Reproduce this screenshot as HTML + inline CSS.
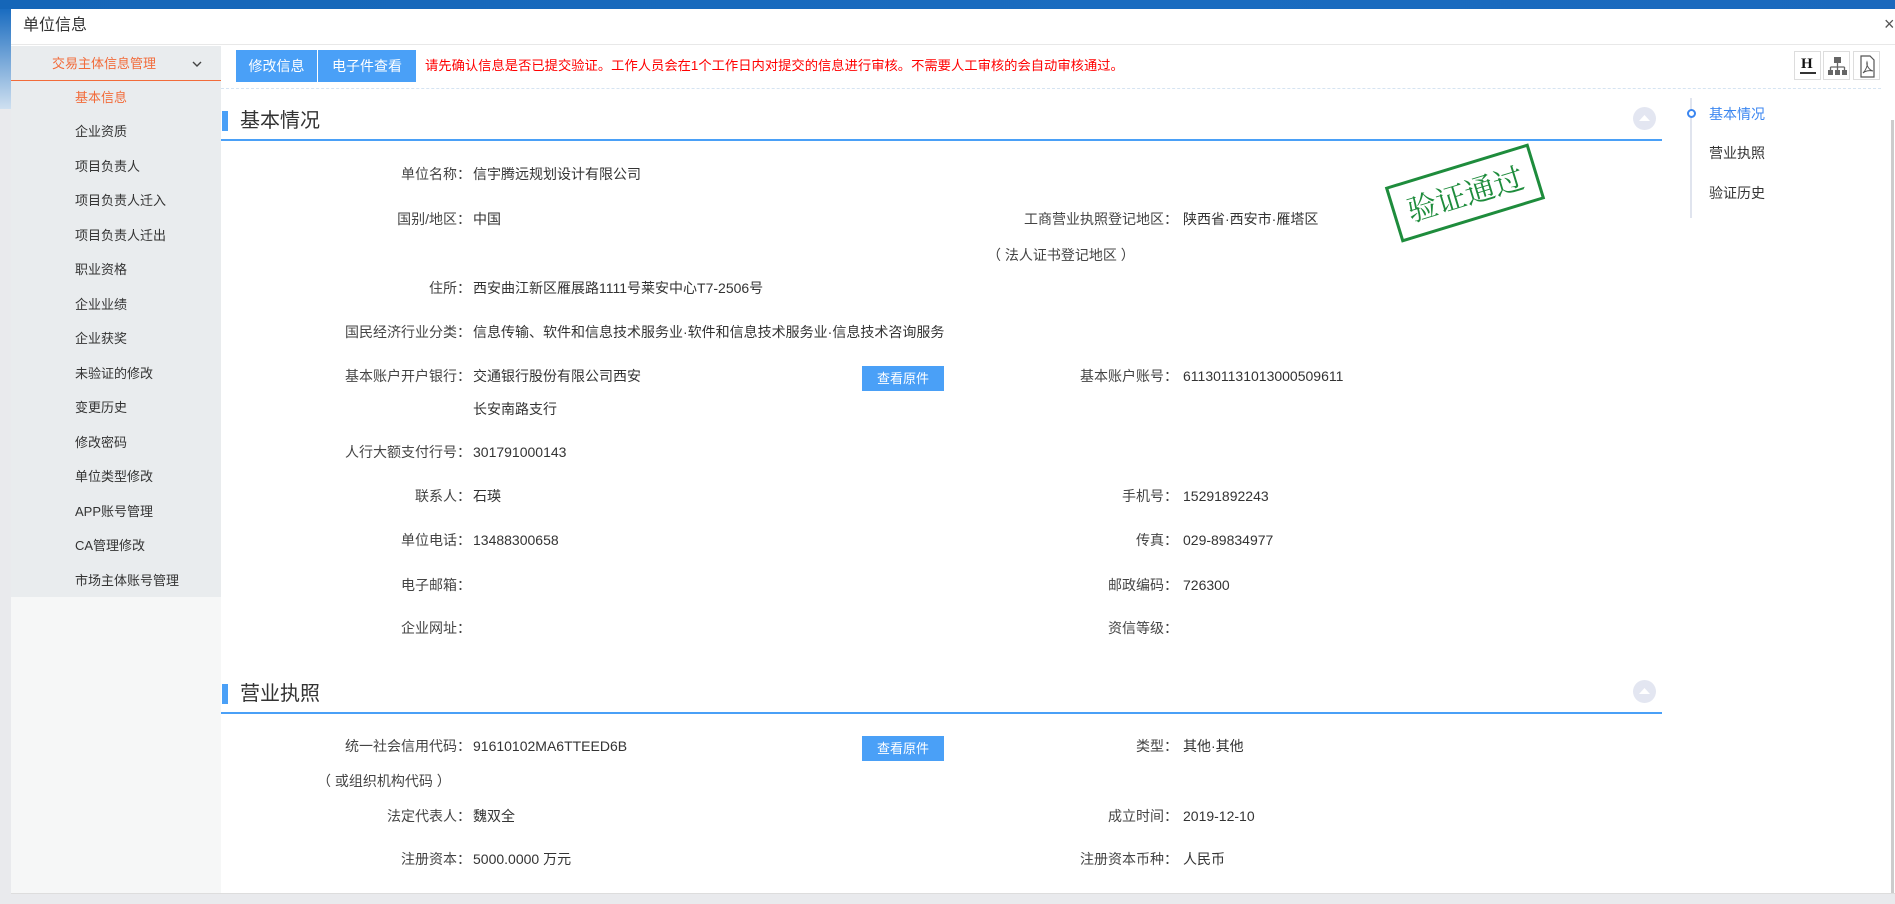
<!DOCTYPE html>
<html><head><meta charset="utf-8"><style>
*{margin:0;padding:0;box-sizing:border-box}
body{width:1895px;height:904px;overflow:hidden;background:#e9eaed;font-family:"Liberation Sans","Noto Sans CJK SC",sans-serif;color:#333;position:relative}
.a{position:absolute;white-space:nowrap}
.lab{position:absolute;font-size:14px;color:#444;text-align:right;line-height:20px;white-space:nowrap}
.val{position:absolute;font-size:14px;color:#333;line-height:20px;white-space:nowrap}
.side div{position:absolute;left:75px;font-size:13px;color:#333;line-height:20px;white-space:nowrap}
.btn{position:absolute;background:#4aa0f7;color:#fff;font-size:14px;text-align:center}
.ib{position:absolute;top:51px;width:27px;height:29px;border:1px solid #ddd;background:#fff}
</style></head><body>
<div class="a" style="left:0;top:0;width:1895px;height:9px;background:linear-gradient(90deg,#1566b8,#1a6cc0 60%,#1b69bd)"></div>
<div class="a" style="left:0;top:9px;width:11px;height:100px;background:linear-gradient(#1a6cc0,#cfe0f0)"></div>
<div class="a" style="left:11px;top:9px;width:1884px;height:885px;background:#fff"></div>
<div class="a" style="left:23px;top:15px;font-size:16px;color:#333;line-height:22px">单位信息</div>
<div class="a" style="left:1884px;top:14px;font-size:18px;color:#555">×</div>
<div class="a" style="left:11px;top:44px;width:1884px;height:1px;background:#e8e8e8"></div>
<div class="a" style="left:11px;top:46px;width:210px;height:551px;background:#e9ecee"></div>
<div class="a" style="left:11px;top:597px;width:210px;height:296px;background:#f6f7f7"></div>
<div class="a" style="left:11px;top:80px;width:210px;height:1px;background:#f26b3a"></div>
<div class="a" style="left:52px;top:54px;font-size:13px;color:#f26b3a;line-height:20px">交易主体信息管理</div>
<svg class="a" style="left:191px;top:59px" width="12" height="10"><path d="M2 3 L6 7 L10 3" stroke="#444" stroke-width="1.4" fill="none"/></svg>
<div class="side">
<div style="top:88px;color:#f26b3a">基本信息</div>
<div style="top:122px">企业资质</div>
<div style="top:157px">项目负责人</div>
<div style="top:191px">项目负责人迁入</div>
<div style="top:226px">项目负责人迁出</div>
<div style="top:260px">职业资格</div>
<div style="top:295px">企业业绩</div>
<div style="top:329px">企业获奖</div>
<div style="top:364px">未验证的修改</div>
<div style="top:398px">变更历史</div>
<div style="top:433px">修改密码</div>
<div style="top:467px">单位类型修改</div>
<div style="top:502px">APP账号管理</div>
<div style="top:536px">CA管理修改</div>
<div style="top:571px">市场主体账号管理</div>
</div>
<div class="btn" style="left:236px;top:50px;width:81px;height:32px;line-height:32px">修改信息</div>
<div class="btn" style="left:318px;top:50px;width:98px;height:32px;line-height:32px">电子件查看</div>
<div class="a" style="left:425px;top:56px;font-size:13.3px;color:#f00;line-height:20px">请先确认信息是否已提交验证。工作人员会在1个工作日内对提交的信息进行审核。不需要人工审核的会自动审核通过。</div>
<div class="ib" style="left:1794px"><div style="position:absolute;left:6px;top:4px;font:bold 15px 'Liberation Serif',serif;color:#111">H</div><div style="position:absolute;left:5px;top:20px;width:16px;height:2px;background:#333"></div></div>
<div class="ib" style="left:1823px"><svg width="27" height="29"><rect x="10" y="5" width="7" height="6" fill="#666"/><path d="M13.5 11v4M6.5 15h14M6.5 15v3M13.5 15v3M20.5 15v3" stroke="#666" stroke-width="1.3" fill="none"/><rect x="4" y="18" width="5" height="5" fill="#666"/><rect x="11" y="18" width="5" height="5" fill="#666"/><rect x="18" y="18" width="5" height="5" fill="#666"/></svg></div>
<div class="ib" style="left:1853px"><svg width="27" height="29"><path d="M7 4h9l4 4v17H7z" stroke="#555" stroke-width="1.2" fill="none"/><path d="M9 21c3-3 5-8 4-11c-1 3 2 8 6 9c-4-1-8 0-10 2z" stroke="#555" stroke-width="1" fill="none"/></svg></div>
<div class="a" style="left:221px;top:88px;width:1660px;border-top:1px dashed #d6e4f2"></div>
<div class="a" style="left:1690px;top:98px;width:2px;height:120px;background:#e0e4ee"></div>
<div class="a" style="left:1687px;top:109px;width:9px;height:9px;border-radius:50%;border:2.5px solid #3b86f0;background:#fff"></div>
<div class="a" style="left:1709px;top:104px;font-size:14px;color:#3b86f0;line-height:20px">基本情况</div>
<div class="a" style="left:1709px;top:143px;font-size:14px;color:#333;line-height:20px">营业执照</div>
<div class="a" style="left:1709px;top:183px;font-size:14px;color:#333;line-height:20px">验证历史</div>
<div class="a" style="left:1891px;top:120px;width:3px;height:774px;background:#ccc"></div>
<div class="a" style="left:222px;top:111px;width:6px;height:20px;background:#4aa0f7"></div>
<div class="a" style="left:240px;top:108px;font-size:20px;color:#333;line-height:26px">基本情况</div>
<div class="a" style="left:221px;top:139px;width:1441px;height:2px;background:#4aa0f7"></div>
<svg class="a" style="left:1633px;top:107px" width="23" height="23"><circle cx="11.5" cy="11.5" r="11.5" fill="#e3e6f1"/><path d="M6 14h11l-5.5-6z" fill="#fff"/></svg>
<div class="a" style="left:1390px;top:164px;width:150px;height:58px;border:3px solid #1e8c3c;transform:rotate(-17deg);font:30px 'Noto Serif CJK SC',serif;color:#1e8c3c;text-align:center;line-height:50px">验证通过</div>
<div class="lab" style="right:1424px;top:164px">单位名称：</div><div class="val" style="left:473px;top:164px">信宇腾远规划设计有限公司</div>
<div class="lab" style="right:1424px;top:209px">国别/地区：</div><div class="val" style="left:473px;top:209px">中国</div>
<div class="lab" style="right:717px;top:209px">工商营业执照登记地区：</div><div class="val" style="left:1183px;top:209px">陕西省·西安市·雁塔区</div>
<div class="lab" style="left:987px;top:245px">（ 法人证书登记地区 ）</div>
<div class="lab" style="right:1424px;top:278px">住所：</div><div class="val" style="left:473px;top:278px">西安曲江新区雁展路1111号莱安中心T7-2506号</div>
<div class="lab" style="right:1424px;top:322px">国民经济行业分类：</div><div class="val" style="left:473px;top:322px">信息传输、软件和信息技术服务业·软件和信息技术服务业·信息技术咨询服务</div>
<div class="lab" style="right:1424px;top:366px">基本账户开户银行：</div><div class="val" style="left:473px;top:366px">交通银行股份有限公司西安</div>
<div class="val" style="left:473px;top:399px">长安南路支行</div>
<div class="btn" style="left:862px;top:366px;width:82px;height:25px;line-height:25px;font-size:13px">查看原件</div>
<div class="lab" style="right:717px;top:366px">基本账户账号：</div><div class="val" style="left:1183px;top:366px">611301131013000509611</div>
<div class="lab" style="right:1424px;top:442px">人行大额支付行号：</div><div class="val" style="left:473px;top:442px">301791000143</div>
<div class="lab" style="right:1424px;top:486px">联系人：</div><div class="val" style="left:473px;top:486px">石瑛</div>
<div class="lab" style="right:717px;top:486px">手机号：</div><div class="val" style="left:1183px;top:486px">15291892243</div>
<div class="lab" style="right:1424px;top:530px">单位电话：</div><div class="val" style="left:473px;top:530px">13488300658</div>
<div class="lab" style="right:717px;top:530px">传真：</div><div class="val" style="left:1183px;top:530px">029-89834977</div>
<div class="lab" style="right:1424px;top:575px">电子邮箱：</div>
<div class="lab" style="right:717px;top:575px">邮政编码：</div><div class="val" style="left:1183px;top:575px">726300</div>
<div class="lab" style="right:1424px;top:618px">企业网址：</div>
<div class="lab" style="right:717px;top:618px">资信等级：</div>
<div class="a" style="left:222px;top:684px;width:6px;height:20px;background:#4aa0f7"></div>
<div class="a" style="left:240px;top:681px;font-size:20px;color:#333;line-height:26px">营业执照</div>
<div class="a" style="left:221px;top:712px;width:1441px;height:2px;background:#4aa0f7"></div>
<svg class="a" style="left:1633px;top:680px" width="23" height="23"><circle cx="11.5" cy="11.5" r="11.5" fill="#e3e6f1"/><path d="M6 14h11l-5.5-6z" fill="#fff"/></svg>
<div class="lab" style="right:1424px;top:736px">统一社会信用代码：</div><div class="val" style="left:473px;top:736px">91610102MA6TTEED6B</div>
<div class="btn" style="left:862px;top:736px;width:82px;height:25px;line-height:25px;font-size:13px">查看原件</div>
<div class="lab" style="right:717px;top:736px">类型：</div><div class="val" style="left:1183px;top:736px">其他·其他</div>
<div class="lab" style="left:317px;top:771px">（ 或组织机构代码 ）</div>
<div class="lab" style="right:1424px;top:806px">法定代表人：</div><div class="val" style="left:473px;top:806px">魏双全</div>
<div class="lab" style="right:717px;top:806px">成立时间：</div><div class="val" style="left:1183px;top:806px">2019-12-10</div>
<div class="lab" style="right:1424px;top:849px">注册资本：</div><div class="val" style="left:473px;top:849px">5000.0000 万元</div>
<div class="lab" style="right:717px;top:849px">注册资本币种：</div><div class="val" style="left:1183px;top:849px">人民币</div>
<div class="a" style="left:11px;top:893px;width:1884px;height:1px;background:#ddd"></div>
</body></html>
